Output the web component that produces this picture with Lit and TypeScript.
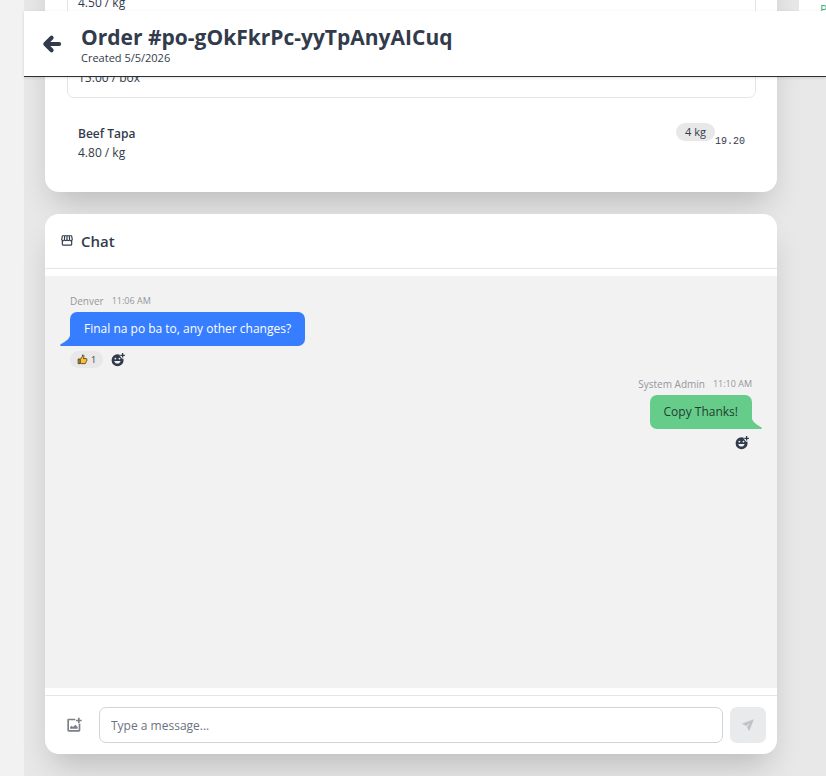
import { LitElement, html, css, svg } from "lit";
import { customElement } from "lit/decorators.js";

const icon = (size: number, body: unknown, box = "0 0 24 24") => html`
  <svg width=${size} height=${size} viewBox=${box} fill="currentColor" aria-hidden="true">${body}</svg>
`;

const arrowLeft = svg`<path d="M20.500 12H5M11.500 4.500L4 12l7.500 7.500" fill="none" stroke="currentColor" stroke-width="5" stroke-linecap="round" stroke-linejoin="round"/>`;
const store = svg`<path fill-rule="evenodd" d="M5 2h14a2 2 0 0 1 2 1.600L22 9a3.500 3.500 0 0 1-1 2.700V18a2 2 0 0 1-2 2H5a2 2 0 0 1-2-2v-6.300A3.500 3.500 0 0 1 2 9l1-5.400A2 2 0 0 1 5 2ZM5 4L4 9.200a1.300 1.300 0 0 0 2.600.2L7 4H5Zm4 0-.4 5.300a1.250 1.250 0 0 0 2.400.2V4H9Zm4 0v5.500a1.250 1.250 0 0 0 2.400-.2L15 4h-2Zm4 0 .4 5.400a1.300 1.300 0 0 0 2.600-.2L19 4h-2ZM5 12.500V18h14v-5.500a3.500 3.500 0 0 1-2.700-1 3.500 3.500 0 0 1-4.300 0 3.500 3.500 0 0 1-4.300 0 3.500 3.500 0 0 1-2.700 1Z"/>`;
const addReaction = svg`<path fill-rule="evenodd" d="M11 2c1.500 0 2.900.3 4.100.9a3 3 0 0 0 1.400 3.600 3 3 0 0 0 1 1.500 3 3 0 0 0 3.500 1.500c.4 1 .6 2.100.6 3.200A10.300 10.300 0 1 1 11 2ZM7.500 8a1.600 1.600 0 1 0 0 3.200 1.600 1.600 0 0 0 0-3.200Zm7 0a1.600 1.600 0 1 0 0 3.200 1.600 1.600 0 0 0 0-3.200ZM5.500 13.500c.8 2.800 2.900 4.500 5.500 4.500s4.700-1.700 5.500-4.500h-11Z"/><path d="M18.800 0h2.200v2.800h2.800V5H21v2.800h-2.200V5H16V2.800h2.800Z"/>`;
const addPhoto = svg`<path d="M14 2.500V5H4.500v14.500H19V10h2.500v10a2 2 0 0 1-2 2H4a2 2 0 0 1-2-2V4.500a2 2 0 0 1 2-2h10Z"/><path d="M18 1h2.500v3h3v2.500h-3v3H18v-3h-3V4h3ZM6 17.500v-2l2.500-2.500 2 2 3.500-3.500 3.500 3.500v2.500Z"/>`;
const plane = svg`<path d="M22 2 14 22.500l-3.600-7.200 5.800-7.200-7.400 5.600L1.500 10Z"/>`;
const thumb = svg`<path d="M2.500 11H7v10H2.500Z" fill="#f0a020" stroke="#3b3526" stroke-width="1.800"/><path d="M7 11.500 11.500 6l.7-4c2.600-.4 3.600 2 2.600 5.500l-.6 2.500H20c1.800 0 2 2.400.8 3 .9 1 .5 2.400-.6 2.800.6 1 .2 2.200-.9 2.500.3 1.200-.4 2.700-2 2.700H10L7 20Z" fill="#fdbf2d" stroke="#3b3526" stroke-width="1.800" stroke-linejoin="round"/>`;

@customElement("app-root")
export class AppRoot extends LitElement {
  static styles = css`
    :host {
      display: block;
      position: relative;
      min-height: 100vh;
      overflow: hidden;
      box-sizing: border-box;
      padding-left: 24px;
      background: #f2f2f2;
      color: #323b4b;
      font-family: "Open Sans", "Noto Sans", sans-serif;
      font-size: 12px;
      line-height: 20px;
    }
    * { box-sizing: border-box; }
    svg { display: block; flex: none; }
    h1, h2, p { margin: 0; }
    button { border: 0; padding: 0; background: none; color: inherit; font: inherit; cursor: pointer; }

    .topbar {
      position: absolute;
      z-index: 2;
      top: 11px;
      left: 24px;
      right: 0;
      display: flex;
      align-items: center;
      gap: 19px;
      height: 66px;
      padding: 0 18px;
      background: #fff;
      border-bottom: 1px solid #2b3038;
      box-shadow: 0 1px 3px rgba(0, 0, 0, 0.12);
    }
    .heading { padding-top: 3px; }
    .title { font-size: 21px; line-height: 26px; font-weight: 700; }
    .created { font-size: 11px; line-height: 16px; }

    .page {
      display: grid;
      grid-template-columns: minmax(0, 1fr) 27px;
      gap: 22px;
      min-height: 100vh;
      padding: 0 0 22px 21px;
      background: #e8e8e8;
    }
    .column { display: flex; flex-direction: column; gap: 22px; }
    .card {
      background: #fff;
      border-radius: 14px;
      box-shadow: 0 18px 32px -8px rgba(0, 0, 0, 0.2);
    }
    .lines {
      display: flex;
      flex-direction: column;
      gap: 13px;
      margin-top: -39px;
      padding: 0 21px 19px 22px;
    }
    .line {
      display: flex;
      justify-content: space-between;
      align-items: flex-end;
      min-height: 62px;
      padding: 10px;
      border: 1px solid #e6e6e6;
      border-radius: 7px;
    }
    .line p { line-height: 19px; }
    .plain { border-color: transparent; }
    .name { font-weight: 600; }
    .amount { display: flex; align-self: flex-start; padding-top: 1px; }
    .qty {
      height: 18px;
      padding: 0 9px;
      border-radius: 9px;
      background: #e8e8e8;
      font-size: 11px;
      line-height: 18px;
    }
    .sum {
      padding-top: 9px;
      font-family: "Liberation Mono", monospace;
      font-size: 10px;
    }

    .chat-head {
      display: flex;
      align-items: center;
      gap: 7px;
      height: 55px;
      padding: 0 15px;
      border-bottom: 1px solid #e6e6e6;
    }
    .chat-head h2 { font-size: 15px; font-weight: 600; }
    .messages {
      min-height: 412px;
      margin: 7px 0;
      padding: 18px 25px;
      background: #f2f2f2;
    }
    .message { display: flex; flex-direction: column; align-items: flex-start; }
    .mine { align-items: flex-end; }
    .meta { display: flex; gap: 8px; color: #94979e; font-size: 10px; line-height: 14px; }
    .meta time { font-size: 9px; }
    .bubble {
      position: relative;
      margin-top: 4px;
      padding: 7px 14px;
      border-radius: 7px 7px 7px 0;
      background: #377dff;
      color: #fff;
    }
    .mine .bubble { border-radius: 7px 7px 0 7px; background: #66cc8a; color: #223d30; }
    .tail { position: absolute; bottom: 0; right: 100%; color: #377dff; }
    .mine .tail { right: auto; left: 100%; color: #66cc8a; transform: scaleX(-1); }
    .reactions { display: flex; align-items: center; gap: 8px; height: 27px; margin-bottom: 4px; }
    .mine .reactions { padding-right: 3px; }
    .reaction {
      display: flex;
      align-items: center;
      gap: 3px;
      height: 17px;
      padding: 0 7px;
      border-radius: 9px;
      background: #e8e8e8;
      font-size: 9px;
    }

    .composer {
      display: flex;
      align-items: center;
      gap: 7px;
      padding: 11px 11px 11px 14px;
      border-top: 1px solid #e6e6e6;
    }
    .attach { display: flex; align-items: center; width: 33px; height: 36px; padding-left: 7px; color: #7b7f88; }
    .field {
      flex: 1;
      min-width: 0;
      height: 36px;
      padding: 0 11px;
      border: 1px solid #d2d4d7;
      border-radius: 7px;
      background: #fff;
      color: inherit;
      font: inherit;
    }
    .field::placeholder { color: #6b7280; opacity: 1; }
    .send {
      display: grid;
      place-items: center;
      width: 36px;
      height: 36px;
      border-radius: 7px;
      background: #e9eaeb;
      color: #bfc2c7;
    }
    .side {
      height: 66px;
      padding-left: 21px;
      border-radius: 0;
      overflow: hidden;
      color: #35b386;
      box-shadow: none;
    }
  `;

  private tail() {
    return html`<svg class="tail" width="10" height="10" viewBox="0 0 10 10" fill="currentColor" aria-hidden="true">
      <path d="M10 0v10H1C0 10 -.3 8.800 .8 8.200 4 6.200 8 4.500 10 0Z" />
    </svg>`;
  }

  private react() {
    return html`<button aria-label="Add reaction">${icon(14, addReaction)}</button>`;
  }

  render() {
    return html`
      <header class="topbar">
        <button aria-label="Back">${icon(20, arrowLeft)}</button>
        <div class="heading">
          <h1 class="title">Order #po-gOkFkrPc-yyTpAnyAICuq</h1>
          <p class="created">Created 5/5/2026</p>
        </div>
      </header>
      <main class="page">
        <div class="column">
          <section class="card lines">
            <div class="line"><p>4.50 / kg</p></div>
            <div class="line"><p>15.00 / box</p></div>
            <div class="line plain">
              <div>
                <p class="name">Beef Tapa</p>
                <p>4.80 / kg</p>
              </div>
              <div class="amount"><span class="qty">4 kg</span><span class="sum">19.20</span></div>
            </div>
          </section>
          <section class="card">
            <header class="chat-head">${icon(14, store)}<h2>Chat</h2></header>
            <div class="messages">
              <article class="message">
                <div class="meta"><span>Denver</span><time>11:06 AM</time></div>
                <div class="bubble">${this.tail()}Final na po ba to, any other changes?</div>
                <div class="reactions">
                  <button class="reaction">${icon(11, thumb)}<span>1</span></button>
                  ${this.react()}
                </div>
              </article>
              <article class="message mine">
                <div class="meta"><span>System Admin</span><time>11:10 AM</time></div>
                <div class="bubble">${this.tail()}Copy Thanks!</div>
                <div class="reactions">${this.react()}</div>
              </article>
            </div>
            <form class="composer" @submit=${(e: Event) => e.preventDefault()}>
              <button class="attach" type="button" aria-label="Attach image">${icon(16, addPhoto)}</button>
              <input class="field" type="text" aria-label="Message" placeholder="Type a message..." />
              <button class="send" disabled aria-label="Send">${icon(14, plane)}</button>
            </form>
          </section>
        </div>
        <aside class="card side">P</aside>
      </main>
    `;
  }
}
